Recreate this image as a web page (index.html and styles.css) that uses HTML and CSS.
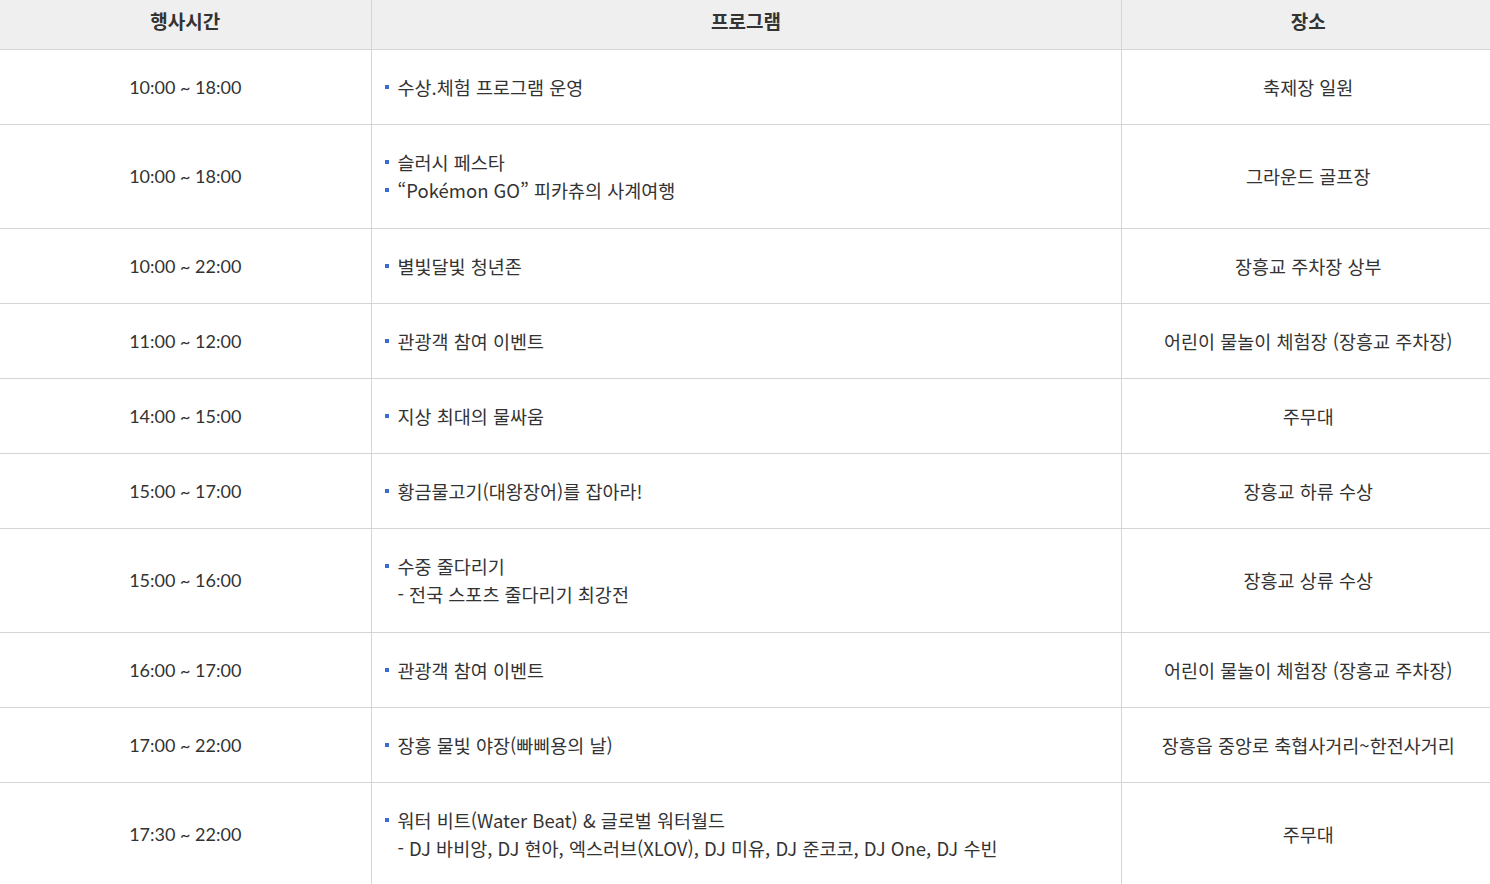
FILE: index.html
```html
<!DOCTYPE html>
<html lang="ko">
<head>
<meta charset="utf-8">
<link rel="stylesheet" href="styles.css">
</head>
<body>
<table class="sched">
  <colgroup><col class="c-time"><col class="c-prog"><col class="c-place"></colgroup>
  <thead>
    <tr><th>행사시간</th><th>프로그램</th><th>장소</th></tr>
  </thead>
  <tbody>
    <tr><td class="time">10:00 ~ 18:00</td><td class="prog"><ul><li>수상.체험 프로그램 운영</li></ul></td><td class="place">축제장 일원</td></tr>
    <tr class="multi"><td class="time">10:00 ~ 18:00</td><td class="prog"><ul><li>슬러시 페스타</li><li>“Pokémon GO” 피카츄의 사계여행</li></ul></td><td class="place">그라운드 골프장</td></tr>
    <tr><td class="time">10:00 ~ 22:00</td><td class="prog"><ul><li>별빛달빛 청년존</li></ul></td><td class="place">장흥교 주차장 상부</td></tr>
    <tr><td class="time">11:00 ~ 12:00</td><td class="prog"><ul><li>관광객 참여 이벤트</li></ul></td><td class="place">어린이 물놀이 체험장 (장흥교 주차장)</td></tr>
    <tr><td class="time">14:00 ~ 15:00</td><td class="prog"><ul><li>지상 최대의 물싸움</li></ul></td><td class="place">주무대</td></tr>
    <tr><td class="time">15:00 ~ 17:00</td><td class="prog"><ul><li>황금물고기(대왕장어)를 잡아라!</li></ul></td><td class="place">장흥교 하류 수상</td></tr>
    <tr class="multi"><td class="time">15:00 ~ 16:00</td><td class="prog"><ul><li>수중 줄다리기<span class="sub">- 전국 스포츠 줄다리기 최강전</span></li></ul></td><td class="place">장흥교 상류 수상</td></tr>
    <tr><td class="time">16:00 ~ 17:00</td><td class="prog"><ul><li>관광객 참여 이벤트</li></ul></td><td class="place">어린이 물놀이 체험장 (장흥교 주차장)</td></tr>
    <tr><td class="time">17:00 ~ 22:00</td><td class="prog"><ul><li>장흥 물빛 야장(빠삐용의 날)</li></ul></td><td class="place">장흥읍 중앙로 축협사거리~한전사거리</td></tr>
    <tr class="multi"><td class="time">17:30 ~ 22:00</td><td class="prog"><ul><li>워터 비트(Water Beat) &amp; 글로벌 워터월드<span class="sub">- DJ 바비앙, DJ 현아, 엑스러브(XLOV), DJ 미유, DJ 준코코, DJ One, DJ 수빈</span></li></ul></td><td class="place">주무대</td></tr>
  </tbody>
</table>
</body>
</html>
```

FILE: styles.css
```css
html, body {
  margin: 0;
  padding: 0;
  background: #fff;
  overflow: hidden;
}
body {
  font-family: "Noto Sans CJK KR", "Noto Sans", sans-serif;
  color: #333;
}
.sched {
  width: 1495px;
  border-collapse: collapse;
  table-layout: fixed;
}
.c-time { width: 371px; }
.c-prog { width: 750px; }
.c-place { width: 374px; }
.sched th {
  background: #efefef;
  height: 49px;
  padding: 0 0 6px;
  font-size: 19px;
  line-height: 24px;
  font-weight: 700;
  color: #333;
  border-bottom: 1px solid #d5d5d5;
  border-left: 1px solid #d5d5d5;
  text-align: center;
  vertical-align: middle;
  box-sizing: border-box;
}
.sched td {
  padding: 23px 0;
  font-size: 18.5px;
  line-height: 28px;
  border-bottom: 1px solid #d5d5d5;
  border-left: 1px solid #d5d5d5;
  vertical-align: middle;
}
.sched .multi td { padding-bottom: 24px; }
.sched th:first-child, .sched td:first-child { border-left: none; }
.time {
  text-align: center;
  font-family: "Lato", "Noto Sans CJK KR", sans-serif;
  font-size: 18px !important;
}
.place { text-align: center; }
.prog { padding-left: 13px !important; }
.prog ul {
  list-style: none;
  margin: 0;
  padding: 0;
}
.prog li {
  position: relative;
  padding-left: 13px;
}
.prog li::before {
  content: "";
  position: absolute;
  left: 0;
  top: 12px;
  width: 4px;
  height: 4px;
  background: #3a6cd3;
}
.sub { display: block; }
```
